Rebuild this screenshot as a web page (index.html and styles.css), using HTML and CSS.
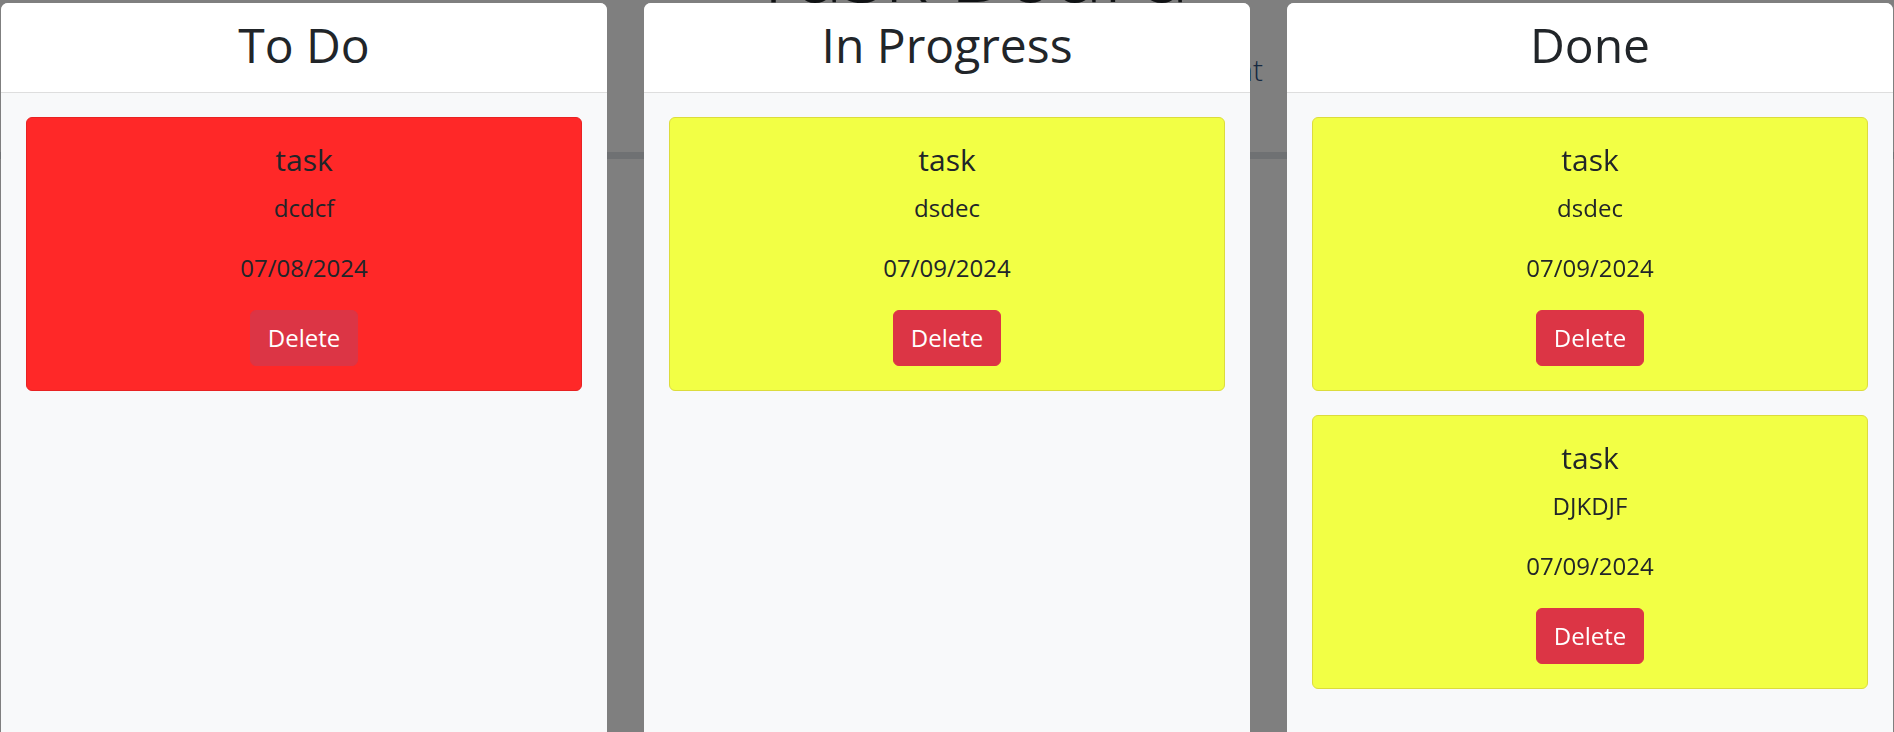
FILE: index.html
```html
<!DOCTYPE html>
<html lang="en">
<head>
<meta charset="utf-8">
<title>Task Board</title>
<link rel="stylesheet" href="styles.css">
</head>
<body>
<div class="page">
  <h1 class="page-title">Task Board</h1>
  <nav class="page-nav"><a class="nav-link" href="#">Add Assignment</a></nav>
  <div class="page-rule"></div>
</div>
<div class="backdrop"></div>
<div class="board">
  <section class="column">
    <header class="column-header"><h2 class="column-title">To Do</h2></header>
    <div class="column-body">
      <article class="task task-red">
        <h5 class="task-title">task</h5>
        <p class="task-desc">dcdcf</p>
        <p class="task-date">07/08/2024</p>
        <button class="btn-delete">Delete</button>
      </article>
    </div>
  </section>
  <section class="column">
    <header class="column-header"><h2 class="column-title">In Progress</h2></header>
    <div class="column-body">
      <article class="task task-yellow">
        <h5 class="task-title">task</h5>
        <p class="task-desc">dsdec</p>
        <p class="task-date">07/09/2024</p>
        <button class="btn-delete">Delete</button>
      </article>
    </div>
  </section>
  <section class="column">
    <header class="column-header"><h2 class="column-title">Done</h2></header>
    <div class="column-body">
      <article class="task task-yellow">
        <h5 class="task-title">task</h5>
        <p class="task-desc">dsdec</p>
        <p class="task-date">07/09/2024</p>
        <button class="btn-delete">Delete</button>
      </article>
      <article class="task task-yellow">
        <h5 class="task-title">task</h5>
        <p class="task-desc">DJKDJF</p>
        <p class="task-date">07/09/2024</p>
        <button class="btn-delete">Delete</button>
      </article>
    </div>
  </section>
</div>
</body>
</html>
```

FILE: styles.css
```css
* {
  box-sizing: border-box;
}

html,
body {
  margin: 0;
  height: 100%;
}

body {
  background: #ffffff;
  font-family: "Open Sans", "Noto Sans", sans-serif;
  color: #212529;
  overflow: hidden;
}

/* page behind the overlay */
.page-title {
  margin: -77px 0 0;
  padding-left: 46px;
  height: 91px;
  font-size: 88px;
  line-height: 90px;
  font-weight: 300;
  text-align: center;
  color: #212529;
}

.page-nav {
  display: flex;
  justify-content: flex-end;
  padding: 38px 631px 0 0;
  height: 74px;
}

.nav-link {
  font-size: 30px;
  line-height: 36px;
  font-weight: 300;
  color: #2c5282;
  text-decoration: none;
}

.page-rule {
  margin-top: 64px;
  height: 7px;
  background: #dee2e6;
}

/* overlay */
.backdrop {
  position: fixed;
  inset: 0;
  background: rgba(0, 0, 0, 0.5);
}

.board {
  position: fixed;
  top: 3px;
  left: 1px;
  display: flex;
  gap: 37px;
}

.column {
  flex: none;
  width: 606px;
  height: 760px;
  background: #f8f9fa;
  border-radius: 7px 7px 0 0;
  overflow: hidden;
  display: flex;
  flex-direction: column;
}

.column-header {
  background: #ffffff;
  padding: 13px 16px 18px;
  border-bottom: 1px solid #dedede;
  text-align: center;
}

.column-title {
  margin: 0;
  font-size: 48px;
  line-height: 58px;
  font-weight: 400;
  color: #212529;
}

.column-body {
  padding: 24px 25px;
  display: flex;
  flex-direction: column;
  gap: 24px;
}

.task {
  border: 1px solid;
  border-radius: 6px;
  padding: 24px;
  display: flex;
  flex-direction: column;
  align-items: center;
  text-align: center;
}

.task-red {
  background: #ff2828;
  border-color: #e82222;
}

.task-yellow {
  background: #f2ff45;
  border-color: #dcdc3c;
}

.task-title {
  margin: 0 0 12px;
  font-size: 30px;
  line-height: 36px;
  font-weight: 400;
}

.task-desc,
.task-date {
  margin: 0 0 24px;
  font-size: 24px;
  line-height: 36px;
}

.btn-delete {
  font-family: inherit;
  font-size: 24px;
  line-height: 36px;
  padding: 9px 17px;
  border: 1px solid #dc3545;
  border-radius: 6px;
  background: #dc3545;
  color: #ffffff;
  cursor: pointer;
}
```
